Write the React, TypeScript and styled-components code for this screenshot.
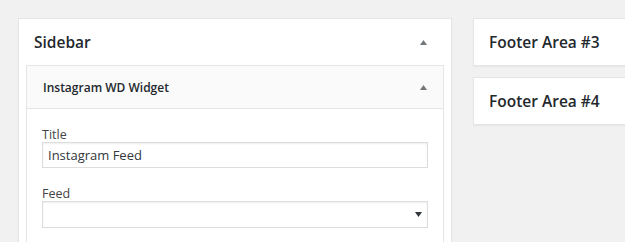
import styled, { createGlobalStyle } from "styled-components";

const GlobalStyle = createGlobalStyle`
  html, body {
    margin: 0;
    padding: 0;
    background: #f1f1f1;
    overflow: hidden;
  }
  body {
    font-family: "Open Sans", "Noto Sans", sans-serif;
    color: #444;
  }
`;

function Arrow({ down }: { down?: boolean }) {
  return (
    <svg width="7" height="5" viewBox="0 0 7 5">
      {down ? (
        <polygon points="0,0 7,0 3.5,5" fill="#32373c" />
      ) : (
        <polygon points="0,5 7,5 3.5,0" fill="#72777c" />
      )}
    </svg>
  );
}

export default function App() {
  return (
    <>
      <GlobalStyle />
      <Page>
        <Column>
          <SidebarCard>
            <CardHeader>
              <CardTitle>Sidebar</CardTitle>
              <Toggle $offset={24}>
                <Arrow />
              </Toggle>
            </CardHeader>
            <Widget>
              <WidgetHeader>
                <WidgetTitle>Instagram WD Widget</WidgetTitle>
                <Toggle $offset={16}>
                  <Arrow />
                </Toggle>
              </WidgetHeader>
              <WidgetBody>
                <Field>
                  <Label>Title</Label>
                  <TextInput defaultValue="Instagram Feed" />
                </Field>
                <Field>
                  <Label>Feed</Label>
                  <Select>
                    <Arrow down />
                  </Select>
                </Field>
              </WidgetBody>
            </Widget>
          </SidebarCard>
        </Column>
        <SideColumn>
          <AreaCard>
            <CardHeader>
              <CardTitle>Footer Area #3</CardTitle>
            </CardHeader>
          </AreaCard>
          <AreaCard>
            <CardHeader>
              <CardTitle>Footer Area #4</CardTitle>
            </CardHeader>
          </AreaCard>
        </SideColumn>
      </Page>
    </>
  );
}

const Page = styled.div`
  display: flex;
  gap: 21px;
  padding: 18px 0 0 18px;
  height: 242px;
  box-sizing: border-box;
  width: 800px;
`;

const Column = styled.div`
  width: 434px;
  flex-shrink: 0;
`;

const SideColumn = styled.div`
  width: 300px;
  display: flex;
  flex-direction: column;
  gap: 11px;
`;

const SidebarCard = styled.div`
  box-sizing: border-box;
  background: #fff;
  border: 1px solid #e5e5e5;
  box-shadow: 0 1px 1px rgba(0, 0, 0, 0.04);
  height: 300px;
`;

const AreaCard = styled.div`
  background: #fff;
  border: 1px solid #e5e5e5;
  box-shadow: 0 1px 1px rgba(0, 0, 0, 0.04);
`;

const CardHeader = styled.div`
  display: flex;
  align-items: center;
  justify-content: space-between;
  height: 46px;
  padding-left: 15px;
`;

const CardTitle = styled.h2`
  margin: 0;
  font-size: 15.5px;
  font-weight: 600;
  color: #23282d;
`;

const Toggle = styled.span<{ $offset: number }>`
  display: flex;
  width: 7px;
  margin-right: ${(p) => p.$offset}px;
  padding-top: 1px;
`;

const Widget = styled.div`
  margin: 0 7px;
  border: 1px solid #e5e5e5;
  background: #fff;
  height: 300px;
`;

const WidgetHeader = styled.div`
  display: flex;
  align-items: center;
  justify-content: space-between;
  height: 42px;
  padding-left: 16px;
  background: #fafafa;
  border-bottom: 1px solid #e5e5e5;
`;

const WidgetTitle = styled.h3`
  margin: 0;
  font-size: 12px;
  font-weight: 600;
  color: #23282d;
`;

const WidgetBody = styled.div`
  padding: 18px 15px 0;
  display: flex;
  flex-direction: column;
  gap: 18px;
`;

const Field = styled.div`
  display: flex;
  flex-direction: column;
`;

const Label = styled.label`
  font-size: 12.5px;
  line-height: 15px;
  color: #444;
`;

const TextInput = styled.input`
  box-sizing: border-box;
  height: 26px;
  width: 100%;
  margin: 0;
  padding: 0 5px;
  border: 1px solid #ddd;
  box-shadow: inset 0 1px 2px rgba(0, 0, 0, 0.07);
  font-family: inherit;
  font-size: 13px;
  color: #32373c;
  outline: none;
`;

const Select = styled.div`
  box-sizing: border-box;
  height: 27px;
  display: flex;
  align-items: center;
  justify-content: flex-end;
  padding-right: 5px;
  border: 1px solid #ddd;
  box-shadow: inset 0 1px 2px rgba(0, 0, 0, 0.07);
  background: #fff;
`;
